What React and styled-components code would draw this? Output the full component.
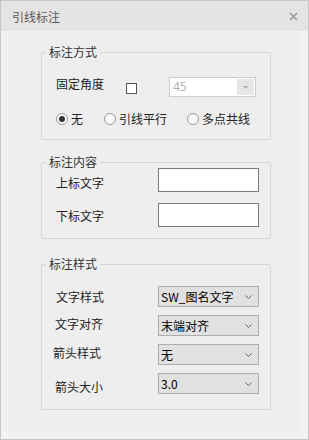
import React from 'react';
import styled, { createGlobalStyle } from 'styled-components';

const GlobalStyle = createGlobalStyle`
  html, body {
    margin: 0;
    padding: 0;
    background: #ffffff;
  }
  body {
    font-family: "Noto Sans CJK SC", "Noto Sans", sans-serif;
    font-size: 12px;
    color: #222;
  }
`;

const Window = styled.div`
  width: 309px;
  height: 440px;
  box-sizing: border-box;
  border: 1px solid #c6c6c6;
  background: #f2f2f2;
  display: flex;
  flex-direction: column;
`;

const TitleBar = styled.div`
  height: 30px;
  flex: none;
  background: #e4e4e4;
  display: flex;
  align-items: center;
  justify-content: space-between;
  padding: 0 10px 0 11px;
`;

const Title = styled.span`
  font-size: 12px;
  line-height: 14px;
  color: #5a5a5a;
  margin-top: 1px;
`;

const CloseButton = styled.span`
  width: 10px;
  height: 10px;
  display: flex;
  align-items: center;
  justify-content: center;
  margin-top: 1px;
`;

const Body = styled.div`
  flex: 1;
  padding: 0 7px 7px 7px;
  display: flex;
`;

const Panel = styled.div`
  flex: 1;
  background: #eeeeee;
  padding: 15px 30px 0 33px;
`;

const Group = styled.fieldset`
  margin: ${(p) => p.$top || 0}px 0 0 0;
  padding: ${(p) => p.$pad};
  border: 1px solid #d6d6d6;
  border-radius: 3px;
  min-width: 0;
`;

/* legend sits at the padding edge, so pull it back over the 14px inset */
const Legend = styled.legend`
  margin-left: -10px;
  padding: 0 3px;
  font-size: 12px;
  line-height: 12px;
  color: #333;
`;

const AngleRow = styled.div`
  display: flex;
  align-items: flex-start;
  height: 20px;
`;

const FieldLabel = styled.span`
  font-size: 12px;
  line-height: 14px;
  color: #222;
  width: ${(p) => p.$width || 'auto'};
  flex: none;
`;

const CheckBox = styled.span`
  width: 11px;
  height: 11px;
  box-sizing: border-box;
  border: 1px solid #555;
  background: #fff;
  margin-top: 6px;
  flex: none;
`;

const DisabledSelect = styled.div`
  width: 87px;
  height: 20px;
  box-sizing: border-box;
  margin-left: 32px;
  border: 1px solid #cccccc;
  background: #fff;
  display: flex;
  align-items: stretch;
  justify-content: space-between;
`;

const DisabledValue = styled.span`
  padding-left: 3px;
  font-family: "Noto Sans", "Liberation Sans", sans-serif;
  font-size: 12px;
  line-height: 18px;
  color: #b4b4b4;
`;

const ArrowBox = styled.span`
  width: 17px;
  margin: 1px;
  background: #e6e6e6;
  display: flex;
  align-items: center;
  justify-content: center;
`;

const RadioRow = styled.div`
  display: grid;
  grid-template-columns: 48px 83px auto;
  align-items: center;
  height: 16px;
  margin-top: 14px;
`;

const RadioItem = styled.label`
  display: flex;
  align-items: center;
  gap: 3px;
  font-size: 12px;
  line-height: 14px;
  color: #222;
`;

const RadioCircle = styled.span`
  width: 12px;
  height: 12px;
  box-sizing: border-box;
  border-radius: 50%;
  border: 1px solid #9a9a9a;
  background: #fafafa;
  display: flex;
  align-items: center;
  justify-content: center;
  flex: none;
  &::after {
    content: '';
    width: 6px;
    height: 6px;
    border-radius: 50%;
    background: ${(p) => (p.$checked ? '#333' : 'transparent')};
  }
`;

const FormGrid = styled.div`
  display: grid;
  grid-template-columns: 102px 101px;
  row-gap: ${(p) => p.$gap}px;
  align-items: center;
`;

const RowLabel = styled.span`
  font-size: 12px;
  line-height: 14px;
  color: #222;
  position: relative;
  left: ${(p) => p.$dx || 0}px;
  top: ${(p) => p.$dy || 0}px;
`;

const TextBox = styled.div`
  height: 24px;
  box-sizing: border-box;
  border: 1px solid #7a7a7a;
  background: #fff;
`;

const Select = styled.div`
  height: 21px;
  box-sizing: border-box;
  border: 1px solid #adadad;
  background: #e1e1e1;
  display: flex;
  align-items: center;
  justify-content: space-between;
  padding: 0 6px 0 2px;
`;

const SelectValue = styled.span`
  font-size: 12px;
  line-height: 14px;
  color: #000;
`;

const Chevron = () => (
  <svg width="7" height="4" viewBox="0 0 7 4">
    <polyline points="0.5,0.5 3.5,3.5 6.5,0.5" fill="none" stroke="#606060" strokeWidth="1" />
  </svg>
);

const STYLE_ROWS = [
  { label: '文字样式', value: 'SW_图名文字', dx: 0, dy: 0 },
  { label: '文字对齐', value: '末端对齐', dx: -1, dy: -2 },
  { label: '箭头样式', value: '无', dx: -3, dy: -2 },
  { label: '箭头大小', value: '3.0', dx: -1, dy: 3 },
];

const App = () => (
  <>
    <GlobalStyle />
    <Window>
      <TitleBar>
        <Title>引线标注</Title>
        <CloseButton>
          <svg width="9" height="9" viewBox="0 0 9 9">
            <path d="M1 1L8 8M8 1L1 8" stroke="#9a9a9a" strokeWidth="1.6" />
          </svg>
        </CloseButton>
      </TitleBar>
      <Body>
        <Panel>
          <Group $pad="19px 0 12px 14px">
            <Legend>标注方式</Legend>
            <AngleRow>
              <FieldLabel $width="70px">固定角度</FieldLabel>
              <CheckBox />
              <DisabledSelect>
                <DisabledValue>45</DisabledValue>
                <ArrowBox>
                  <svg width="5" height="3" viewBox="0 0 5 3">
                    <polygon points="0,0 5,0 2.5,3" fill="#a8a8a8" />
                  </svg>
                </ArrowBox>
              </DisabledSelect>
            </AngleRow>
            <RadioRow>
              <RadioItem>
                <RadioCircle $checked />无
              </RadioItem>
              <RadioItem>
                <RadioCircle />引线平行
              </RadioItem>
              <RadioItem>
                <RadioCircle />多点共线
              </RadioItem>
            </RadioRow>
          </Group>

          <Group $top={16} $pad="0 0 11px 14px">
            <Legend>标注内容</Legend>
            <FormGrid $gap={11}>
              <RowLabel $dy={3}>上标文字</RowLabel>
              <TextBox />
              <RowLabel $dy={1}>下标文字</RowLabel>
              <TextBox />
            </FormGrid>
          </Group>

          <Group $top={19} $pad="16px 0 15px 14px">
            <Legend>标注样式</Legend>
            <FormGrid $gap={8}>
              {STYLE_ROWS.map((row) => (
                <React.Fragment key={row.label}>
                  <RowLabel $dx={row.dx} $dy={row.dy}>{row.label}</RowLabel>
                  <Select>
                    <SelectValue>{row.value}</SelectValue>
                    <Chevron />
                  </Select>
                </React.Fragment>
              ))}
            </FormGrid>
          </Group>
        </Panel>
      </Body>
    </Window>
  </>
);

export default App;
